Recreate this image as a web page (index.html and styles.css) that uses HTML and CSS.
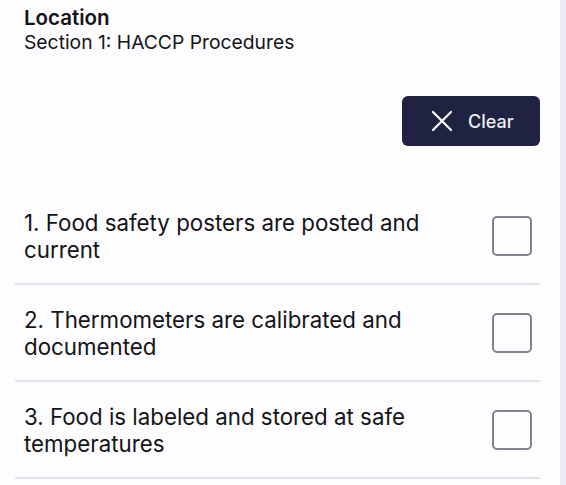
FILE: index.html
```html
<!DOCTYPE html>
<html>
<head>
<meta charset="utf-8">
<link rel="stylesheet" href="styles.css">
</head>
<body>
<div class="page">
  <main class="content">
    <header class="head">
      <div class="title">Location</div>
      <div class="subtitle">Section 1: HACCP Procedures</div>
    </header>
    <div class="actions">
      <button class="clear-btn">
        <svg class="x-icon" width="22" height="22" viewBox="0 0 22 22"><path d="M2 2 L20 20 M20 2 L2 20" stroke="#ffffff" stroke-width="2.2" stroke-linecap="round" fill="none"/></svg>
        <span>Clear</span>
      </button>
    </div>
    <ul class="list">
      <li class="item"><span class="label">1. Food safety posters are posted and current</span><span class="check"></span></li>
      <li class="item"><span class="label">2. Thermometers are calibrated and documented</span><span class="check"></span></li>
      <li class="item"><span class="label">3. Food is labeled and stored at safe temperatures</span><span class="check"></span></li>
    </ul>
  </main>
  <div class="rail"></div>
</div>
</body>
</html>
```
FILE: styles.css
```css
html, body {
  margin: 0;
  padding: 0;
  background: #fdfcfe;
  font-family: Inter, "Liberation Sans", sans-serif;
  color: #141417;
}
.page {
  display: flex;
  height: 485px;
  overflow: hidden;
}
.content {
  flex: 1;
  padding: 6px 20px 0 15px;
}
.rail {
  width: 6px;
  background: #ececf7;
}
.head {
  padding-left: 9px;
}
.title {
  font-size: 20.5px;
  font-weight: 600;
  line-height: 24px;
}
.subtitle {
  font-size: 19.3px;
  line-height: 25px;
}
.actions {
  display: flex;
  justify-content: flex-end;
  margin-top: 41px;
}
.clear-btn {
  display: flex;
  align-items: center;
  gap: 15px;
  width: 138px;
  height: 50px;
  padding: 0 0 0 29px;
  border: none;
  border-radius: 6px;
  background: #1f2240;
  color: #eceef6;
  font-family: Inter, "Liberation Sans", sans-serif;
  font-size: 18px;
  font-weight: 500;
}
.list {
  list-style: none;
  margin: 42px 0 0;
  padding: 0;
}
.item {
  display: flex;
  align-items: center;
  justify-content: space-between;
  height: 95px;
  padding: 0 8px 0 9px;
  border-bottom: 2px solid #e3e2e7;
}
.label {
  font-size: 22.3px;
  line-height: 27px;
  max-width: 430px;
}
.check {
  width: 36px;
  height: 36px;
  border: 2px solid #80828f;
  border-radius: 5px;
  flex: none;
}
```
